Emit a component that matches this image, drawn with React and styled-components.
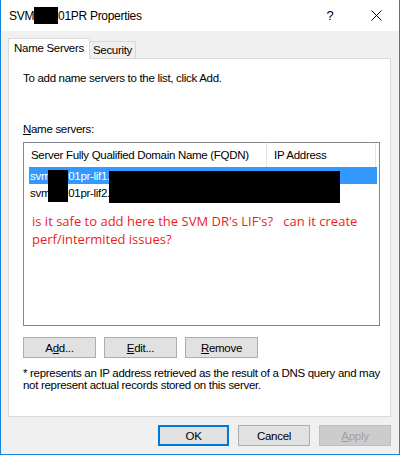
import React from "react";
import styled, { createGlobalStyle } from "styled-components";

const Global = createGlobalStyle`
  html, body {
    margin: 0;
    padding: 0;
    background: #ffffff;
  }
  body {
    font-family: "Liberation Sans", Arial, sans-serif;
    font-size: 11.5px;
    letter-spacing: -0.3px;
    color: #000;
  }
`;

const Window = styled.div`
  width: 400px;
  height: 455px;
  box-sizing: border-box;
  border: 1px solid #1883d7;
  border-top: none;
  display: flex;
  flex-direction: column;
  background: #f0f0f0;
`;

const TitleBar = styled.div`
  height: 31px;
  background: #fff;
  display: flex;
  align-items: center;
  padding-left: 8px;
  font-size: 12px;
`;

const TitleText = styled.div`
  flex: 1;
  display: flex;
  align-items: center;
`;

const Redact = styled.span`
  display: inline-block;
  background: #000;
  width: ${(p) => p.w}px;
  height: ${(p) => p.h}px;
`;

const Spacer = styled.span`
  display: inline-block;
  width: ${(p) => p.w}px;
`;

const TitleButton = styled.div`
  width: ${(p) => p.w}px;
  display: flex;
  justify-content: center;
  align-items: center;
  font-size: 13px;
`;

const Body = styled.div`
  flex: 1;
  padding: 7px 8px 0 7px;
  display: flex;
  flex-direction: column;
`;

const Tabs = styled.div`
  display: flex;
  align-items: flex-end;
  height: 20px;
  position: relative;
  z-index: 1;
`;

const Tab = styled.div`
  box-sizing: border-box;
  border: 1px solid #d9d9d9;
  border-bottom: ${(p) => (p.active ? "1px solid #fff" : "none")};
  background: ${(p) => (p.active ? "#fff" : "#f0f0f0")};
  width: ${(p) => p.w}px;
  height: ${(p) => (p.active ? 21 : 17)}px;
  margin-bottom: ${(p) => (p.active ? -1 : 0)}px;
  padding-top: ${(p) => (p.active ? 3 : 2)}px;
  margin-left: ${(p) => (p.active ? 0 : -1)}px;
  display: flex;
  justify-content: center;
  align-items: flex-start;
`;

const Panel = styled.div`
  box-sizing: border-box;
  height: 359px;
  border: 1px solid #d9d9d9;
  background: #fff;
  padding: 12px 11px 0 14px;
  display: flex;
  flex-direction: column;
`;

const Label = styled.div`
  line-height: 14px;
  margin-bottom: ${(p) => p.mb || 0}px;
`;

const U = styled.span`
  text-decoration: underline;
  text-underline-offset: 1px;
`;

const ListBox = styled.div`
  box-sizing: border-box;
  width: 357px;
  height: 184px;
  border: 1px solid #828790;
  position: relative;
  overflow: hidden;
`;

const Header = styled.div`
  display: grid;
  grid-template-columns: 243px 109px 1fr;
  height: 24px;
`;

const HeaderCell = styled.div`
  padding-left: 7px;
  display: flex;
  align-items: center;
  white-space: nowrap;
  border-right: 1px solid #e5e5e5;
`;

const Row = styled.div`
  height: 17px;
  margin-left: 5px;
  width: 347px;
  display: flex;
  align-items: center;
  padding-left: 1px;
  white-space: nowrap;
  background: ${(p) => (p.selected ? "#3399ff" : "transparent")};
  color: ${(p) => (p.selected ? "#fff" : "#000")};
`;

const Overlay = styled.div`
  position: absolute;
  background: #000;
  left: ${(p) => p.x}px;
  top: ${(p) => p.y}px;
  width: ${(p) => p.w}px;
  height: ${(p) => p.h}px;
`;

const Note = styled.div`
  font-family: "Open Sans", "Noto Sans", sans-serif;
  color: #ed1c24;
  font-size: 13px;
  letter-spacing: 0;
  line-height: 18px;
  padding: 11px 0 0 8px;
  white-space: pre;
`;

const ButtonRow = styled.div`
  display: flex;
  gap: ${(p) => p.gap || 8}px;
  margin-top: ${(p) => p.mt || 0}px;
`;

const Button = styled.div`
  box-sizing: border-box;
  width: ${(p) => p.w || 73}px;
  height: 21px;
  border: ${(p) => (p.primary ? "2px solid #0078d7" : "1px solid #adadad")};
  border-color: ${(p) => (p.disabled ? "#bfbfbf" : undefined)};
  background: ${(p) => (p.disabled ? "#cccccc" : "#e1e1e1")};
  color: ${(p) => (p.disabled ? "#a0a0a0" : "#000")};
  display: flex;
  align-items: center;
  justify-content: center;
`;

const Footnote = styled.div`
  margin-top: 9px;
  line-height: 12px;
  white-space: nowrap;
`;

const Footer = styled.div`
  padding: 8px 0 0 150px;
`;

const App = () => {
  return (
    <>
      <Global />
      <Window>
        <TitleBar>
          <TitleText>
            SVM
            <Redact w={24} h={17} />
            01PR Properties
          </TitleText>
          <TitleButton w={46}>?</TitleButton>
          <TitleButton w={46}>
            <svg width="11" height="11" viewBox="0 0 11 11">
              <path d="M0.5 0.5 L10.5 10.5 M10.5 0.5 L0.5 10.5" stroke="#000" strokeWidth="1" />
            </svg>
          </TitleButton>
        </TitleBar>
        <Body>
          <Tabs>
            <Tab active w={82}>Name Servers</Tab>
            <Tab w={47}>Security</Tab>
          </Tabs>
          <Panel>
            <Label mb={37}>To add name servers to the list, click Add.</Label>
            <Label mb={6}>
              <U>N</U>ame servers:
            </Label>
            <ListBox>
              <Header>
                <HeaderCell>Server Fully Qualified Domain Name (FQDN)</HeaderCell>
                <HeaderCell>IP Address</HeaderCell>
                <div />
              </Header>
              <Row selected>
                svm
                <Spacer w={18} />
                01pr-lif1.
              </Row>
              <Row>
                svm
                <Spacer w={18} />
                01pr-lif2.
              </Row>
              <Overlay x={24} y={27} w={20} h={32} />
              <Overlay x={85} y={28} w={231} h={32} />
              <Note>
                {"is it safe to add here the SVM DR's LIF's?   can it create\nperf/intermited issues?"}
              </Note>
            </ListBox>
            <ButtonRow mt={11}>
              <Button>
                <span>
                  A<U>d</U>d...
                </span>
              </Button>
              <Button>
                <span>
                  <U>E</U>dit...
                </span>
              </Button>
              <Button>
                <span>
                  <U>R</U>emove
                </span>
              </Button>
            </ButtonRow>
            <Footnote>
              * represents an IP address retrieved as the result of a DNS query and may
              <br />
              not represent actual records stored on this server.
            </Footnote>
          </Panel>
          <Footer>
            <ButtonRow gap={9}>
              <Button primary w={72}>
                OK
              </Button>
              <Button>Cancel</Button>
              <Button disabled>
                <span>
                  <U>A</U>pply
                </span>
              </Button>
            </ButtonRow>
          </Footer>
        </Body>
      </Window>
    </>
  );
};

export default App;
